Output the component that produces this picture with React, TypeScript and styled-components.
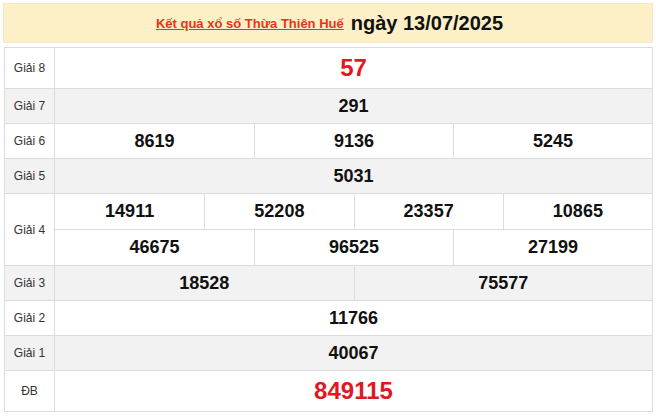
import React from 'react'
import styled, { createGlobalStyle } from 'styled-components'

const GlobalStyle = createGlobalStyle`
    body {
        margin: 0;
        background: #fff;
        font-family: "Liberation Sans", Arial, sans-serif;
    }
`

type Prize = {
    label: string
    rows: string[][]
    big?: boolean
}

const prizes: Prize[] = [
    { label: 'Giải 8', rows: [['57']], big: true },
    { label: 'Giải 7', rows: [['291']] },
    { label: 'Giải 6', rows: [['8619', '9136', '5245']] },
    { label: 'Giải 5', rows: [['5031']] },
    { label: 'Giải 4', rows: [['14911', '52208', '23357', '10865'], ['46675', '96525', '27199']] },
    { label: 'Giải 3', rows: [['18528', '75577']] },
    { label: 'Giải 2', rows: [['11766']] },
    { label: 'Giải 1', rows: [['40067']] },
    { label: 'ĐB', rows: [['849115']], big: true },
]

export default function App() {
    return (
        <Page>
            <GlobalStyle />
            <Header>
                <TitleLink href="#">Kết quả xổ số Thừa Thiên Huế</TitleLink>
                <DateText>ngày 13/07/2025</DateText>
            </Header>
            <Table>
                {prizes.map((p, i) => (
                    <PrizeRow key={p.label} $shade={i % 2 === 1} $tall={!!p.big}>
                        <Label>{p.label}</Label>
                        <Numbers>
                            {p.rows.map((r, j) => (
                                <NumberLine key={j} $cols={r.length} $first={j === 0} $multi={p.rows.length > 1}>
                                    {r.map((n, k) => (
                                        <Cell key={n} $big={!!p.big} $first={k === 0}>{n}</Cell>
                                    ))}
                                </NumberLine>
                            ))}
                        </Numbers>
                    </PrizeRow>
                ))}
            </Table>
        </Page>
    )
}

const Page = styled.div`
    width: 656px;
    padding: 3px 3px 0 4px;
    box-sizing: border-box;
`

const Header = styled.div`
    height: 40px;
    margin-left: -1px;
    background: #fdf0c6;
    border: 1px solid #f3e9c8;
    box-sizing: border-box;
    display: flex;
    align-items: center;
    justify-content: center;
    gap: 7px;
    padding-left: 3px;
`

const TitleLink = styled.a`
    color: #e8331c;
    font-size: 13px;
    font-weight: bold;
    text-decoration: underline;
`

const DateText = styled.span`
    color: #111;
    font-size: 20px;
    font-weight: bold;
`

const Table = styled.div`
    margin-top: 4px;
    border: 1px solid #dcdcdc;
    border-bottom: none;
`

const PrizeRow = styled.div<{ $shade: boolean; $tall: boolean }>`
    display: grid;
    grid-template-columns: 50px 1fr;
    background: ${p => (p.$shade ? '#f2f2f2' : '#fff')};
    border-bottom: 1px solid #dcdcdc;
    min-height: ${p => (p.$tall ? '40px' : '34px')};
`

const Label = styled.div`
    display: flex;
    align-items: center;
    justify-content: center;
    font-size: 12px;
    color: #333;
    border-right: 1px solid #dcdcdc;
`

const Numbers = styled.div`
    display: flex;
    flex-direction: column;
`

const NumberLine = styled.div<{ $cols: number; $first: boolean; $multi: boolean }>`
    flex: 1;
    display: grid;
    grid-template-columns: repeat(${p => p.$cols}, 1fr);
    border-top: ${p => (p.$first ? 'none' : '1px solid #dcdcdc')};
    min-height: ${p => (p.$multi ? '35px' : '34px')};
`

const Cell = styled.div<{ $big: boolean; $first: boolean }>`
    display: flex;
    align-items: center;
    justify-content: center;
    font-weight: bold;
    font-size: ${p => (p.$big ? '24px' : '18px')};
    color: ${p => (p.$big ? '#e3171f' : '#111')};
    border-left: ${p => (p.$first ? 'none' : '1px solid #dcdcdc')};
`
